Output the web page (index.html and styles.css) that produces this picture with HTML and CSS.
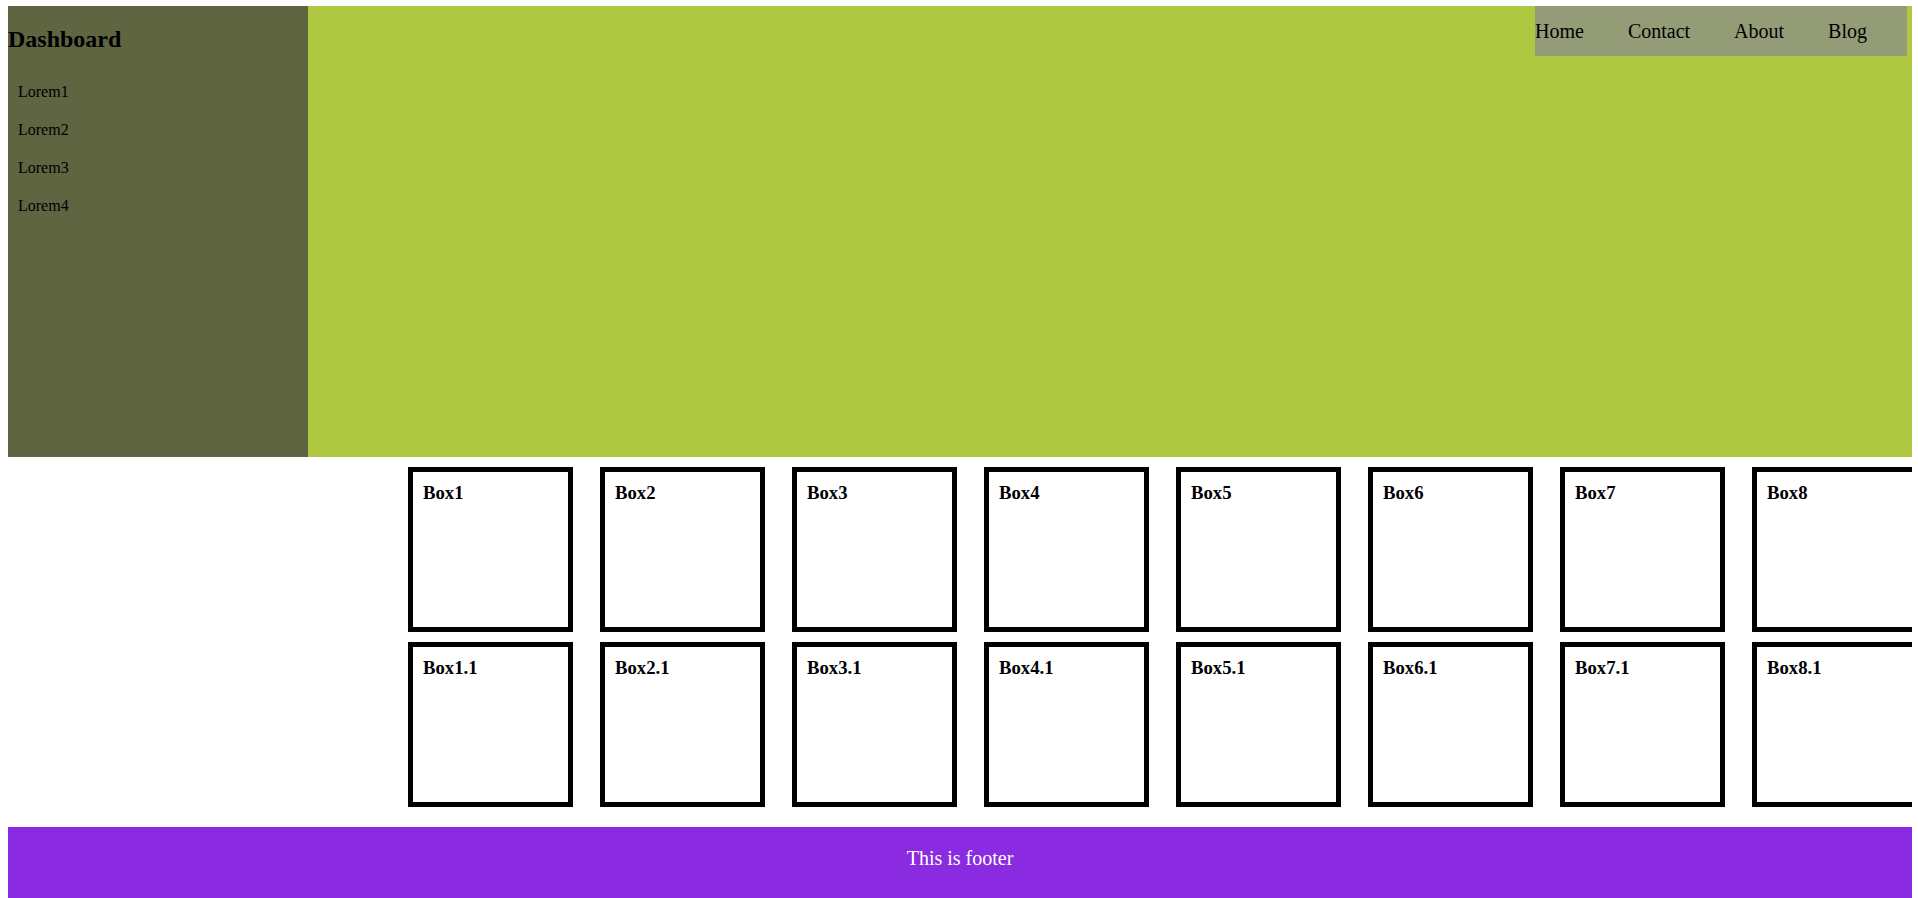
FILE: index.html
```html
<!DOCTYPE html>
<html>
<head>
<meta charset="utf-8">
<title>Dashboard</title>
<link rel="stylesheet" href="styles.css">
</head>
<body>
  <header class="top">
    <aside class="sidebar">
      <h2 class="brand">Dashboard</h2>
      <ul class="side-list">
        <li>Lorem1</li>
        <li>Lorem2</li>
        <li>Lorem3</li>
        <li>Lorem4</li>
      </ul>
    </aside>
    <div class="hero">
      <nav class="nav">
        <a href="#">Home</a>
        <a href="#">Contact</a>
        <a href="#">About</a>
        <a href="#">Blog</a>
      </nav>
    </div>
  </header>
  <main class="boxes">
    <div class="row">
      <div class="box"><h3>Box1</h3></div>
      <div class="box"><h3>Box2</h3></div>
      <div class="box"><h3>Box3</h3></div>
      <div class="box"><h3>Box4</h3></div>
      <div class="box"><h3>Box5</h3></div>
      <div class="box"><h3>Box6</h3></div>
      <div class="box"><h3>Box7</h3></div>
      <div class="box"><h3>Box8</h3></div>
    </div>
    <div class="row">
      <div class="box"><h3>Box1.1</h3></div>
      <div class="box"><h3>Box2.1</h3></div>
      <div class="box"><h3>Box3.1</h3></div>
      <div class="box"><h3>Box4.1</h3></div>
      <div class="box"><h3>Box5.1</h3></div>
      <div class="box"><h3>Box6.1</h3></div>
      <div class="box"><h3>Box7.1</h3></div>
      <div class="box"><h3>Box8.1</h3></div>
    </div>
  </main>
  <footer class="footer">This is footer</footer>
</body>
</html>
```

FILE: styles.css
```css
body {
  margin: 6px 6px 0 8px;
  font-family: "Liberation Serif", "Times New Roman", serif;
  color: #000;
  background: #fff;
}
.top {
  display: flex;
  height: 451px;
}
.sidebar {
  width: 300px;
  flex-shrink: 0;
  background: #5f6441;
}
.brand {
  margin: 20px 0;
  font-size: 24px;
  line-height: 27px;
  font-weight: bold;
}
.side-list {
  list-style: none;
  margin: 0;
  padding: 0;
}
.side-list li {
  padding: 10px;
  font-size: 16px;
  line-height: 18px;
}
.hero {
  flex: 1;
  background: #afc842;
  display: flex;
  justify-content: flex-end;
  align-items: flex-start;
}
.nav {
  display: flex;
  gap: 44px;
  background: #939b77;
  padding: 14px 40px 13px 0;
  margin-right: 5px;
}
.nav a {
  color: #000;
  text-decoration: none;
  font-size: 20px;
  line-height: 23px;
}
.boxes {
  margin: 10px -6px 0 0;
  padding-left: 400px;
  display: flex;
  flex-direction: column;
  gap: 10px;
}
.row {
  display: flex;
  gap: 27px;
}
.box {
  box-sizing: border-box;
  width: 165px;
  height: 165px;
  flex-shrink: 0;
  border: 5px solid #000;
  padding: 10px;
}
.box h3 {
  margin: 0;
  font-size: 18.72px;
  line-height: 21px;
  font-weight: bold;
}
.footer {
  margin-top: 20px;
  background: #8a2be2;
  color: #fff;
  text-align: center;
  font-size: 20px;
  line-height: 23px;
  padding: 20px 0 28px;
}
```
